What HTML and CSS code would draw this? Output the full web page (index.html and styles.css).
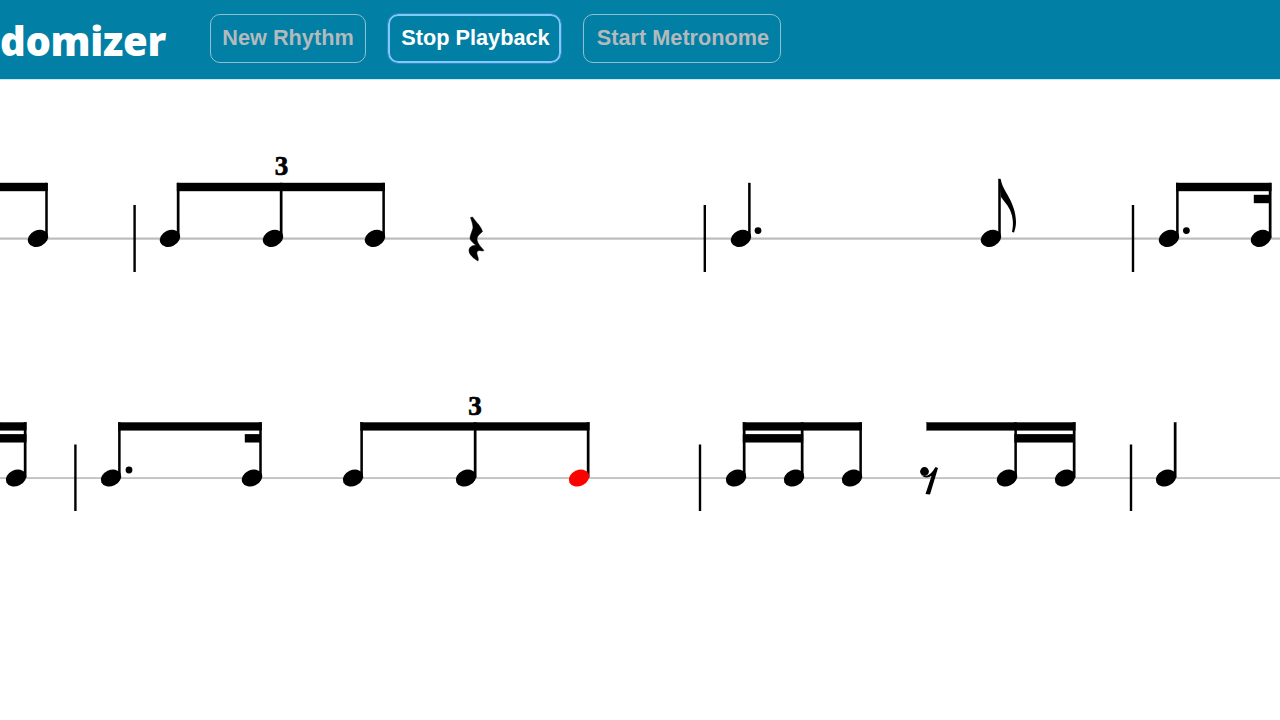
FILE: index.html
```html
<!DOCTYPE html>
<html lang="en">
<head>
    <meta charset="UTF-8">
    <meta name="viewport" content="width=device-width, initial-scale=1.0">
    <title>Rhythm Randomizer</title>
    <link rel="stylesheet" href="styles.css">
</head>
<body>
    <header class="topbar">
        <h1 class="brand">domizer</h1>
        <nav class="controls">
            <button class="ctl ctl-new">New Rhythm</button>
            <button class="ctl ctl-active">Stop Playback</button>
            <button class="ctl ctl-metro">Start Metronome</button>
        </nav>
    </header>

    <svg class="score" viewBox="0 80 1280 640" width="1280" height="640" role="img" aria-label="Rhythm notation">
        <defs>
            <ellipse id="head" rx="10.6" ry="8.1" transform="rotate(-25)"/>
        </defs>

        <!-- first staff -->
        <rect class="staff" x="0" y="237.5" width="1280" height="2.2"/>
        <rect class="bar" x="133.4" y="205" width="2.4" height="67"/>
        <rect class="bar" x="703.6" y="205" width="2.4" height="67"/>
        <rect class="bar" x="1131.8" y="205" width="2.4" height="67"/>

        <rect class="stem" x="45.4" y="183" width="2.2" height="55"/>
        <rect class="stem" x="177" y="183" width="2.2" height="55"/>
        <rect class="stem" x="280" y="183" width="2.2" height="55"/>
        <rect class="stem" x="382.6" y="183" width="2.2" height="55"/>
        <rect class="stem" x="748.2" y="183" width="2.2" height="55"/>
        <rect class="stem" x="998.4" y="179" width="2.2" height="59"/>
        <rect class="stem" x="1176.2" y="183" width="2.2" height="55"/>
        <rect class="stem" x="1269" y="183" width="2.2" height="55"/>

        <rect class="beam" x="0" y="183" width="47.6" height="8"/>
        <rect class="beam" x="177" y="183" width="207.8" height="8"/>
        <rect class="beam" x="1176.2" y="183" width="95" height="8"/>
        <rect class="beam" x="1254" y="195" width="16" height="8"/>

        <use href="#head" x="38" y="238.3"/>
        <use href="#head" x="170" y="238.3"/>
        <use href="#head" x="273" y="238.3"/>
        <use href="#head" x="375" y="238.3"/>
        <use href="#head" x="741" y="238.3"/>
        <use href="#head" x="991" y="238.3"/>
        <use href="#head" x="1169" y="238.3"/>
        <use href="#head" x="1261" y="238.3"/>

        <circle cx="758" cy="230.6" r="3.4"/>
        <circle cx="1186.4" cy="230.6" r="3.4"/>
        <text class="tuplet" x="281.5" y="175">3</text>

        <path class="rest" d="M470.5 217.5 L472.5 217 C475 221 481 226 482.5 231.5 C480 234 477 236 477 239 C477 243 481 247 484 250.5 L482 251 C478 249.5 476.5 251.5 477 254 C477.5 256.5 479 258.5 478 261 C474 258.5 469 255 469 250.5 C469 246.5 473 245 476 245.5 C473.5 243 470.5 241 470 238.5 C470 235 472 232 473 228 C473 224 471.5 221 470.5 217.5 Z"/>
        <path d="M999 180 L1001 180 C1002 190 1016 202 1016 222 C1016 226 1015 230 1014 232.5 L1012 232 C1013.5 225 1013.5 218 1010 210 C1007 204 1003 200 1001 197 Z"/>

        <!-- second staff -->
        <rect class="staff" x="0" y="477.2" width="1280" height="1.7"/>
        <rect class="bar" x="74.2" y="444.5" width="2.4" height="66.5"/>
        <rect class="bar" x="698.8" y="444.5" width="2.4" height="66.5"/>
        <rect class="bar" x="1129.8" y="444.5" width="2.4" height="66.5"/>

        <rect class="stem" x="24" y="422.5" width="2.2" height="55"/>
        <rect class="stem" x="118.2" y="422.5" width="2.2" height="55"/>
        <rect class="stem" x="259.4" y="422.5" width="2.2" height="55"/>
        <rect class="stem" x="360.6" y="422.5" width="2.2" height="55"/>
        <rect class="stem" x="474" y="422.5" width="2.2" height="55"/>
        <rect class="stem" x="587" y="422.5" width="2.2" height="55"/>
        <rect class="stem" x="743" y="422.5" width="2.2" height="55"/>
        <rect class="stem" x="801" y="422.5" width="2.2" height="55"/>
        <rect class="stem" x="859.6" y="422.5" width="2.2" height="55"/>
        <rect class="stem" x="1014.6" y="422.5" width="2.2" height="55"/>
        <rect class="stem" x="1073" y="422.5" width="2.2" height="55"/>
        <rect class="stem" x="1174" y="422.5" width="2.2" height="55"/>

        <rect class="beam" x="0" y="422.5" width="26.2" height="7.8"/>
        <rect class="beam" x="0" y="434.2" width="26.2" height="8"/>
        <rect class="beam" x="118.2" y="422.5" width="143.4" height="7.8"/>
        <rect class="beam" x="245" y="434.2" width="15" height="8"/>
        <rect class="beam" x="360.6" y="422.5" width="228.6" height="7.8"/>
        <rect class="beam" x="743" y="422.5" width="118.8" height="7.8"/>
        <rect class="beam" x="743" y="434.2" width="60" height="8"/>
        <rect class="beam" x="926.7" y="422.5" width="148.5" height="7.8"/>
        <rect class="beam" x="1014.6" y="434.2" width="60" height="8"/>

        <use href="#head" x="16" y="478"/>
        <use href="#head" x="111" y="478"/>
        <use href="#head" x="252" y="478"/>
        <use href="#head" x="353" y="478"/>
        <use href="#head" x="466" y="478"/>
        <use class="playing" href="#head" x="579" y="478"/>
        <use href="#head" x="736" y="478"/>
        <use href="#head" x="794" y="478"/>
        <use href="#head" x="852" y="478"/>
        <use href="#head" x="1007" y="478"/>
        <use href="#head" x="1065" y="478"/>
        <use href="#head" x="1166" y="478"/>

        <circle cx="129" cy="470" r="3.4"/>
        <text class="tuplet" x="475" y="414.5">3</text>

        <circle cx="924.5" cy="471.5" r="4.4"/>
        <path d="M921 475 C926 477.5 931 475 935.5 467 L938 468 L930 494.5 L925.5 494 L931.5 476 C928 478 924 478 921 475 Z"/>
    </svg>
</body>
</html>
```

FILE: styles.css
```css
body {
    margin: 0;
    background-color: #fff;
    font-family: "Liberation Sans", Arial, sans-serif;
    overflow: hidden;
}
.topbar {
    display: flex;
    align-items: center;
    height: 79px;
    background-color: #027fa4;
    border-bottom: 1px solid #c4ecf8;
}
.brand {
    width: 166px;
    margin: 3px 44px 0 0;
    color: #fff;
    font-family: "Open Sans", sans-serif;
    font-size: 40px;
    font-weight: 800;
    letter-spacing: -0.3px;
    line-height: 1;
    white-space: nowrap;
}
.controls {
    display: flex;
    gap: 22px;
    margin-bottom: 3px;
}
.ctl {
    height: 49px;
    padding: 0;
    background: transparent;
    border: 1px solid #8fbfd0;
    border-radius: 10px;
    color: #b3babd;
    font-family: "Liberation Sans", Arial, sans-serif;
    font-size: 21.7px;
    font-weight: bold;
}
.ctl-new {
    width: 156px;
}
.ctl-active {
    width: 173px;
    padding-left: 2px;
    border: 2px solid #7fcbf7;
    outline: 1px solid #2f86c0;
    color: #fff;
}
.ctl-metro {
    width: 198px;
    padding-left: 2px;
}
.score {
    display: block;
}
.staff {
    fill: #bcbcbc;
}
.bar, .stem, .beam {
    fill: #000;
}
.stem, .beam {
    stroke: #000;
    stroke-width: 0.4;
}
.rest {
    stroke: #000;
    stroke-width: 0.5;
}
.tuplet {
    font-family: "Liberation Serif", serif;
    font-size: 27px;
    font-weight: bold;
    text-anchor: middle;
    stroke: #000;
    stroke-width: 0.7;
}
.playing {
    fill: #f00;
}
```
